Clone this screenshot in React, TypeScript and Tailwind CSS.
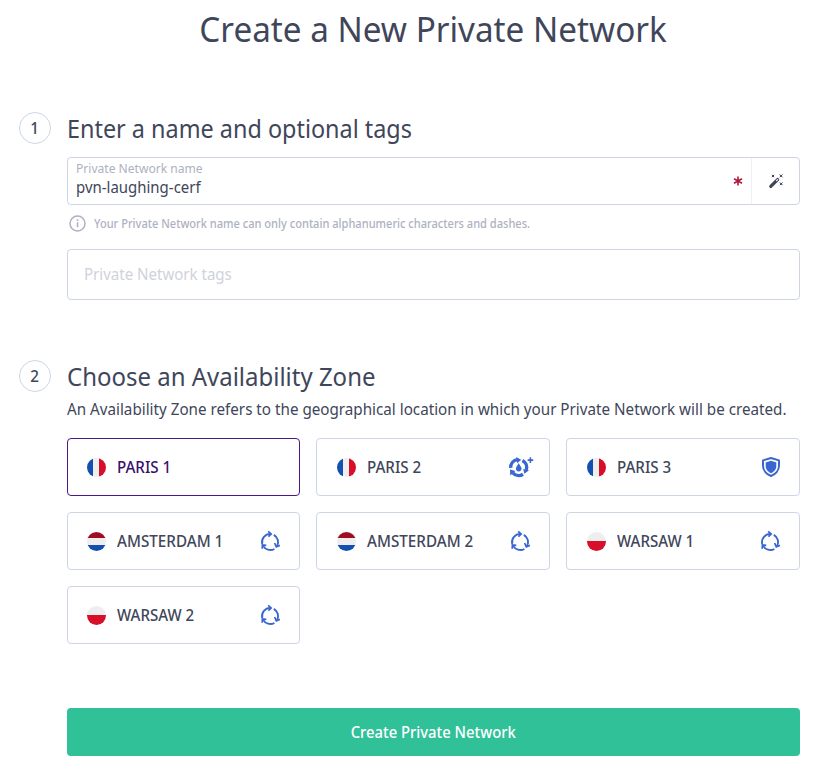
import React from "react";

type Flag = "fr" | "nl" | "pl";
type Badge = "none" | "drop" | "shield" | "cycle";

const zones: { name: string; flag: Flag; badge: Badge; scale: string }[] = [
  { name: "PARIS 1", flag: "fr", badge: "none", scale: "scale-x-[0.945]" },
  { name: "PARIS 2", flag: "fr", badge: "drop", scale: "scale-x-[0.945]" },
  { name: "PARIS 3", flag: "fr", badge: "shield", scale: "scale-x-[0.945]" },
  { name: "AMSTERDAM 1", flag: "nl", badge: "cycle", scale: "scale-x-[0.95]" },
  { name: "AMSTERDAM 2", flag: "nl", badge: "cycle", scale: "scale-x-[0.95]" },
  { name: "WARSAW 1", flag: "pl", badge: "cycle", scale: "scale-x-[0.94]" },
  { name: "WARSAW 2", flag: "pl", badge: "cycle", scale: "scale-x-[0.94]" },
];

function FlagIcon({ flag }: { flag: Flag }) {
  if (flag === "fr")
    return (
      <span className="flex h-[19px] w-[19px] shrink-0 overflow-hidden rounded-full">
        <span className="w-[6px] bg-[#124fae]" />
        <span className="w-[6px] bg-[#eeeeee]" />
        <span className="flex-1 bg-[#d80f2b]" />
      </span>
    );
  if (flag === "nl")
    return (
      <span className="flex h-[19px] w-[19px] shrink-0 flex-col overflow-hidden rounded-full">
        <span className="h-[6px] bg-[#a00d22]" />
        <span className="h-[7px] bg-[#eeeeee]" />
        <span className="flex-1 bg-[#124fae]" />
      </span>
    );
  return (
    <span className="flex h-[19px] w-[19px] shrink-0 flex-col overflow-hidden rounded-full">
      <span className="h-[9px] bg-[#eeeeee]" />
      <span className="flex-1 bg-[#d80f2b]" />
    </span>
  );
}

function BadgeIcon({ badge }: { badge: Badge }) {
  if (badge === "drop")
    return (
      <svg width="28" height="24" viewBox="0 0 28 24" fill="none" className="-mr-1">
        <g stroke="#3a66d1" strokeWidth="3.4">
          <path d="M4.7 12.9 A8 8 0 0 1 11.04 4.67" />
          <path d="M16.4 5.4 A8 8 0 0 1 20.3 14.97" />
          <path d="M17 19.25 A8 8 0 0 1 6.75 17.85" />
        </g>
        <g fill="#3a66d1">
          <path d="M10.2 2 L15.2 4.8 L11.2 8.2 Z" />
          <path d="M17.2 13.9 L23 15.2 L18.4 18.8 Z" />
          <path d="M9.4 16 L4.2 20.4 L4 14.4 Z" />
          <path d="M12.7 8 C11.9 10.4 9.9 11.6 9.9 13.6 A2.8 2.8 0 0 0 15.5 13.6 C15.5 11.6 13.5 10.4 12.7 8 Z" />
        </g>
        <path d="M24.4 2.3 V7.9 M21.6 5.1 H27.2" stroke="#3a66d1" strokeWidth="1.6" />
      </svg>
    );
  if (badge === "shield")
    return (
      <svg width="20" height="22" viewBox="0 0 20 22" fill="none" className="mr-[-1px]">
        <path
          d="M10 2 L18 4.4 V9.5 C18 14.5 14.3 18.4 10 20 C5.7 18.4 2 14.5 2 9.5 V4.4 Z"
          stroke="#3a66d1"
          strokeWidth="2"
          strokeLinejoin="round"
        />
        <path d="M10 4.8 L15.3 6.5 V10 C15.3 13.4 12.8 16 10 17.2 C7.2 16 4.7 13.4 4.7 10 V6.5 Z" fill="#3a66d1" />
      </svg>
    );
  if (badge === "cycle")
    return (
      <svg width="20" height="22" viewBox="0 0 20 22" fill="none" stroke="#3a66d1" strokeWidth="1.9">
        <path d="M2.2 14 A8.3 8.3 0 0 1 10.6 3.9" />
        <path d="M8.2 1.4 L11.2 4 L8.4 6.7" strokeWidth="1.7" />
        <path d="M13.8 4.8 A8.3 8.3 0 0 1 16.9 16.4" />
        <path d="M14.6 13 L16.3 16.9 L20 15.4" strokeWidth="1.7" />
        <path d="M14.4 19 A8.3 8.3 0 0 1 3 15.6" />
        <path d="M2.2 18.8 L2.4 14.9 L6.3 15.3" strokeWidth="1.7" />
      </svg>
    );
  return null;
}

function Step({ number, children }: { number: number; children: React.ReactNode }) {
  return (
    <section className="flex gap-4">
      <div className="flex h-8 w-8 shrink-0 items-center justify-center rounded-full border border-[#cdd5e6] text-base font-medium">
        <span className="scale-x-[0.95]">{number}</span>
      </div>
      <div className="min-w-0 flex-1">{children}</div>
    </section>
  );
}

export default function App() {
  return (
    <main
      className="h-[780px] w-[825px] overflow-hidden bg-white pl-[19px] pr-[25px] text-[#40465a]"
      style={{ fontFamily: '"Noto Sans", sans-serif' }}
    >
      <h1 className="flex h-[58px] justify-center pl-12 text-[35px] leading-[58px] whitespace-nowrap">
        <span className="inline-block scale-x-[0.95]">Create a New Private Network</span>
      </h1>

      <div className="mt-[54px]">
        <Step number={1}>
          <h2 className="h-[45px] text-[25px] leading-[32px] whitespace-nowrap">
            <span className="inline-block origin-left scale-x-[0.936]">Enter a name and optional tags</span>
          </h2>
          <div className="flex h-12 rounded border border-[#cdd5e6]">
            <div className="flex-1 pl-2 whitespace-nowrap">
              <div className="h-[21px] text-[12.5px] leading-[21px] text-[#adb1c1]">
                <span className="inline-block origin-left scale-x-[0.965]">Private Network name</span>
              </div>
              <div className="text-[16px] leading-[17px]">
                <span className="inline-block origin-left scale-x-[0.935]">pvn-laughing-cerf</span>
              </div>
            </div>
            <div className="flex w-[27px] items-center justify-center">
              <svg width="10" height="10" viewBox="0 0 10 10" stroke="#b3183a" strokeWidth="1.6">
                <path d="M5 0.5 V9.5 M1 2.7 L9 7.3 M9 2.7 L1 7.3" />
              </svg>
            </div>
            <div className="flex w-12 items-center justify-center border-l border-[#eff1f6]">
              <svg width="16" height="16" viewBox="0 0 16 16" fill="none">
                <path d="M2.8 13.4 L9.6 6.6" stroke="#40465a" strokeWidth="3.3" strokeLinecap="round" />
                <path d="M8.6 7.6 L9.6 6.6" stroke="white" strokeWidth="1.2" strokeLinecap="round" />
                <path
                  d="M3.8 1.8 L6.2 4.2 M6.2 1.8 L3.8 4.2 M11.6 1.4 L14.6 4.4 M14.6 1.4 L11.6 4.4 M11.8 9.4 L14.6 12.2 M14.6 9.4 L11.8 12.2"
                  stroke="#40465a"
                  strokeWidth="0.9"
                />
                <path d="M4 2 H6 V4 H4 Z M12.2 2 H14 V3.8 H12.2 Z M12.3 10 H14 V11.7 H12.3 Z" fill="#40465a" />
              </svg>
            </div>
          </div>
          <div className="flex h-11 pt-[10px] pl-[1.5px] text-[#adb1c1]">
            <svg width="17" height="17" viewBox="0 0 17 17" fill="none" stroke="#adb1c1" strokeWidth="1.5">
              <circle cx="8.5" cy="8.5" r="7.5" />
              <path d="M8.5 7.3 V12.3 M8.5 4.3 V6" />
            </svg>
            <span className="ml-[8.5px] h-[17px] origin-left scale-x-[0.922] text-[12px] leading-[17px] font-medium whitespace-nowrap">
              Your Private Network name can only contain alphanumeric characters and dashes.
            </span>
          </div>
          <div className="h-[51px] rounded border border-[#cdd5e6] pl-[15.5px] text-[16px] leading-[48px] text-[#cfd2dc]">
            <span className="inline-block origin-left scale-x-[0.94]">Private Network tags</span>
          </div>
        </Step>
      </div>

      <div className="mt-[60px]">
        <Step number={2}>
          <h2 className="h-[34px] text-[25px] leading-[32px] whitespace-nowrap">
            <span className="inline-block origin-left scale-x-[0.959]">Choose an Availability Zone</span>
          </h2>
          <p className="h-11 text-[16px] leading-[31px] whitespace-nowrap">
            <span className="inline-block origin-left scale-x-[0.95]">
              An Availability Zone refers to the geographical location in which your Private Network will be created.
            </span>
          </p>
          <div className="-ml-[0.5px] grid grid-cols-3 gap-4">
            {zones.map((zone, index) => (
              <div
                key={zone.name}
                className={
                  "flex h-[58px] items-center rounded border pr-[19px] pl-[19.5px] text-[16px] font-medium " +
                  (index === 0 ? "border-[#4b1789] text-[#38106e]" : "border-[#cdd5e6]")
                }
              >
                <FlagIcon flag={zone.flag} />
                <span className={"mb-px ml-[11px] flex-1 origin-left whitespace-nowrap " + zone.scale}>
                  {zone.name}
                </span>
                <BadgeIcon badge={zone.badge} />
              </div>
            ))}
          </div>
          <button className="mt-16 flex h-12 w-full items-center justify-center rounded bg-[#30c199] text-[16px] font-medium text-white">
            <span className="mb-px inline-block scale-x-[0.925]">Create Private Network</span>
          </button>
        </Step>
      </div>
    </main>
  );
}
